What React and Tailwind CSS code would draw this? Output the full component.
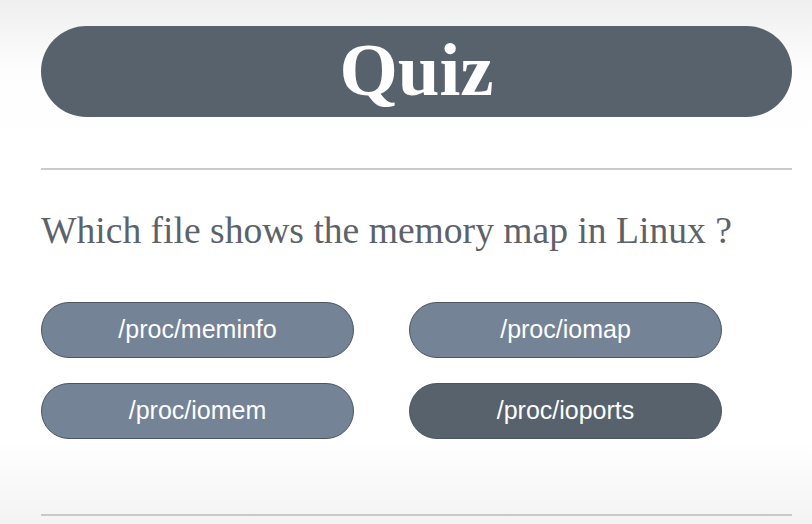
const options = ['/proc/meminfo', '/proc/iomap', '/proc/iomem', '/proc/ioports'];

function App() {
  const hovered = '/proc/ioports';

  return (
    <div className="w-[812px] h-[524px] overflow-hidden bg-[linear-gradient(to_bottom,#efefef_0px,#fdfdfd_70px,#ffffff_140px,#ffffff_440px,#f3f3f3_524px)]">
      <div className="pl-[41px] pr-[20px] pt-[26px]">
        <div className="h-[91px] rounded-full bg-[#58626c] flex items-center justify-center">
          <h1 className="text-white text-[75px] font-bold leading-none font-['Liberation_Serif',serif] -mt-[4px]">
            Quiz
          </h1>
        </div>

        <div className="mt-[51px] h-[2px] bg-[#cbcbcb]" />

        <p className="mt-[40px] text-[37.6px] leading-[42px] text-[#5c626a] font-['Liberation_Serif',serif]">
          Which file shows the memory map in Linux ?
        </p>

        <div className="mt-[50px] grid grid-cols-[313px_313px] gap-x-[55px] gap-y-[25px]">
          {options.map((opt) => (
            <button
              key={opt}
              className={`h-[56px] rounded-full border border-[#4b5561] text-white text-[25px] font-['Liberation_Sans',Arial,sans-serif] ${
                opt === hovered ? 'bg-[#58626d]' : 'bg-[#748396]'
              }`}
            >
              {opt}
            </button>
          ))}
        </div>

        <div className="mt-[75px] h-[2px] bg-[#c9c9c9]" />
      </div>
    </div>
  );
}

export default App;
